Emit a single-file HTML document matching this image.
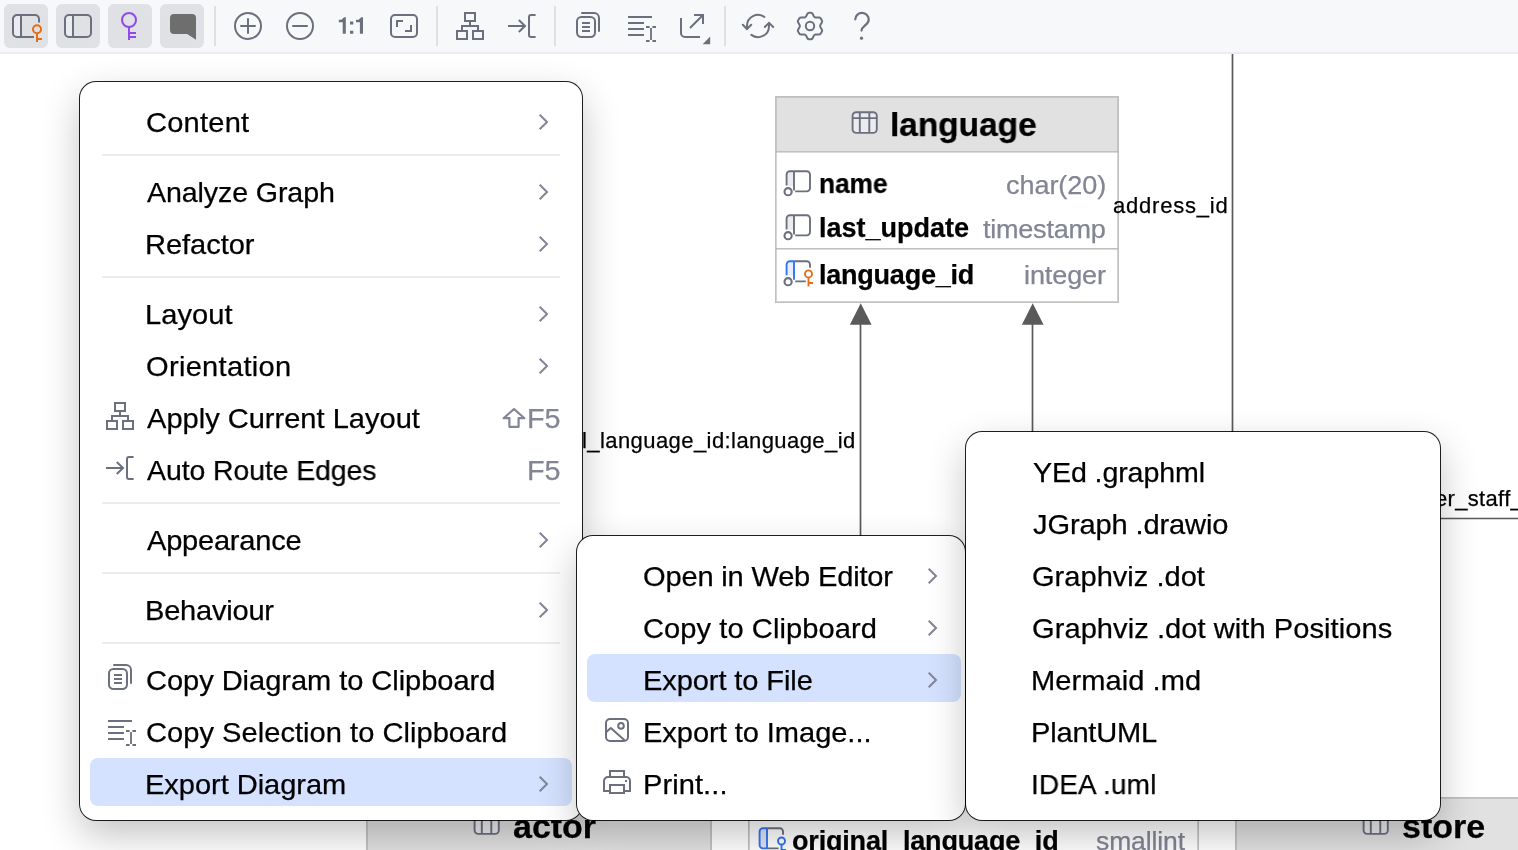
<!DOCTYPE html>
<html><head><meta charset="utf-8"><title>Diagram</title>
<style>
html,body{margin:0;padding:0}
body{width:1518px;height:850px;overflow:hidden;background:#fff;font-family:"Liberation Sans",sans-serif;position:relative;color:#000}
svg{display:block;overflow:visible}
#canvas{position:absolute;left:0;top:0;width:1518px;height:850px;overflow:hidden}
.edges{position:absolute;left:0;top:0}
#toolbar{position:absolute;left:0;top:0;width:1518px;height:52px;background:#f7f8fa;border-bottom:2px solid #ebecf0}
.tb{position:absolute;top:4px;width:44px;height:44px;border-radius:6px}
.tb svg{position:absolute;left:6px;top:6px}
.tb.pressed{background:#dfe1e5}
.tsep{position:absolute;top:6px;width:2px;height:40px;background:#dfe0e6}
.ddtri{position:absolute;left:701.5px;top:36px}
.menu{position:absolute;background:#fff;border-radius:16px;box-shadow:0 0 0 1px rgba(0,0,0,.88),0 15px 38px rgba(0,0,0,.24)}
.t{-webkit-text-stroke:0.25px currentColor;position:absolute;white-space:nowrap;transform-origin:0 50%;color:#000;will-change:transform}
.t.sc{color:#818594}
.t.ctype{color:#818594}
.t.one{color:#6C707E}
.sep{position:absolute;height:2px;background:#ebecf0}
.selrow{position:absolute;height:48px;border-radius:8px;background:#d4e2ff}
.micon,.chev,.shift{position:absolute}
.dtable{position:absolute;box-sizing:border-box;border:1px solid #c0c0c0;background:#fff}
.dtable::after{content:"";position:absolute;left:0;top:0;right:0;bottom:0;box-shadow:inset 0 0 0 1px rgba(170,170,170,.5);pointer-events:none}
.dhead{position:absolute;left:0;top:0;right:0;background:#e1e1e1}
.drule{position:absolute;left:0;right:0;height:1px;background:#c0c0c0;box-shadow:0 1px 0 rgba(170,170,170,.42)}
.ticon{position:absolute}
.mi{font-size:28.5px;line-height:28.5px;font-weight:normal;transform:scaleX(1.02);}
.sc{font-size:28.5px;line-height:28.5px;font-weight:normal;transform:scaleX(1.02);}
.lab{font-size:22px;line-height:22px;font-weight:normal;}
.thead{font-size:34px;line-height:34px;font-weight:bold;}
.cname{font-size:27px;line-height:27px;font-weight:bold;}
.ctype{font-size:26px;line-height:26px;font-weight:normal;transform:scaleX(1.04);}
.one{font-size:24px;line-height:24px;font-weight:bold;}
</style></head><body>
<div id="canvas">
<svg class="edges" width="1518" height="850" viewBox="0 0 1518 850">
 <g stroke="#5a5a5a" stroke-width="1.700" fill="none">
  <path d="M1232.500 52V460"/>
  <path d="M860.500 322V560"/>
  <path d="M1032.500 322V460"/>
  <path d="M1425 540V520.500a2 2 0 0 1 2-2H1520"/>
 </g>
 <path d="M860.700 303.300L849.900 324.800H871.600z" fill="#5a5a5a"/>
 <path d="M1032.700 303.300L1021.900 324.800H1043.600z" fill="#5a5a5a"/>
</svg>

<div class="dtable" style="left:775px;top:96px;width:344px;height:207px">
  <div class="dhead" style="height:54px"></div>
  <div class="drule" style="top:54px"></div>
  <div class="drule" style="top:151px"></div>
  <div class="ticon" style="left:71.20000000000005px;top:10px"><svg width="34" height="34" viewBox="0 0 34 34" fill="none" stroke-width="1.9">
<rect x="5.600" y="5.200" width="24.200" height="20.700" rx="3.600" fill="#EBECF0" stroke="#6C707E"/>
<path d="M5.600 11.100H29.800M12.800 5.200V25.900M22.300 5.200V25.900" stroke="#6C707E"/></svg></div>
  <div class="ticon" style="left:5px;top:69px"><svg width="34" height="34" viewBox="0 0 34 34" fill="none" stroke-width="1.9">
<path d="M6.500 6.200h6v14h-6z" fill="#EBECF0"/>
<path d="M5.600 19.500V8.500a3.300 3.300 0 0 1 3.300-3.300H25.700a3.300 3.300 0 0 1 3.300 3.300V22.100a3.300 3.300 0 0 1-3.300 3.300H14.200" stroke="#6C707E"/>
<path d="M13 5.200V24.600" stroke="#6C707E"/>
<circle cx="7.100" cy="25.700" r="3.600" fill="#fff" stroke="#6C707E" stroke-width="2.100"/></svg></div>
  <div class="ticon" style="left:5px;top:113.30000000000001px"><svg width="34" height="34" viewBox="0 0 34 34" fill="none" stroke-width="1.9">
<path d="M6.500 6.200h6v14h-6z" fill="#EBECF0"/>
<path d="M5.600 19.500V8.500a3.300 3.300 0 0 1 3.300-3.300H25.700a3.300 3.300 0 0 1 3.300 3.300V22.100a3.300 3.300 0 0 1-3.300 3.300H14.200" stroke="#6C707E"/>
<path d="M13 5.200V24.600" stroke="#6C707E"/>
<circle cx="7.100" cy="25.700" r="3.600" fill="#fff" stroke="#6C707E" stroke-width="2.100"/></svg></div>
  <div class="ticon" style="left:5px;top:159px"><svg width="34" height="34" viewBox="0 0 34 34" fill="none" stroke-width="1.9">
<path d="M6.500 6.200h6v13.500h-6z" fill="#E7EFFD"/>
<path d="M13.900 5.200H25.700a3.300 3.300 0 0 1 3.300 3.300V11.800M14.200 25.400H24.800" stroke="#6C707E"/>
<path d="M5.600 19.300V8.500a3.300 3.300 0 0 1 3.300-3.300H13V23.800" stroke="#3574F0"/>
<circle cx="7.100" cy="25.700" r="3.600" fill="#fff" stroke="#6C707E" stroke-width="2.100"/>
<circle cx="27.500" cy="17.900" r="3.500" stroke="#E66D17"/>
<path d="M27.500 21.400V30.600M27.500 27H32" stroke="#E66D17"/></svg></div>
  <span id="th" class="t thead" style="left:113.79px;top:9.71px;letter-spacing:-0.100px;transform:scaleX(0.9870);">language</span>
  <span id="c1" class="t cname" style="left:43.43px;top:74.14px;letter-spacing:-0.104px;transform:scaleX(0.9752);">name</span>
  <span id="c2" class="t cname" style="left:43.41px;top:118.34px;letter-spacing:0.007px;">last_update</span>
  <span id="c3" class="t cname" style="left:43.41px;top:164.64px;letter-spacing:-0.225px;">language_id</span>
  <span id="d1" class="t ctype" style="left:229.67px;top:74.99px;letter-spacing:-0.064px;">char(20)</span>
  <span id="d2" class="t ctype" style="left:206.71px;top:119.19px;letter-spacing:-0.235px;">timestamp</span>
  <span id="d3" class="t ctype" style="left:247.67px;top:165.49px;letter-spacing:-0.113px;">integer</span>
</div>

<div class="dtable" style="left:366px;top:797px;width:346px;height:80px">
  <div class="dhead" style="height:76px"></div>
  <div class="ticon" style="left:102.39999999999998px;top:9.799999999999955px"><svg width="34" height="34" viewBox="0 0 34 34" fill="none" stroke-width="1.9">
<rect x="5.600" y="5.200" width="24.200" height="20.700" rx="3.600" fill="#EBECF0" stroke="#6C707E"/>
<path d="M5.600 11.100H29.800M12.800 5.200V25.900M22.300 5.200V25.900" stroke="#6C707E"/></svg></div>
  <span id="ba" class="t thead" style="left:145.71px;top:10.51px;letter-spacing:-0.029px;">actor</span>
</div>
<div class="dtable" style="left:748px;top:797px;width:451px;height:80px">
  <div class="ticon" style="left:5.100000000000023px;top:24.799999999999955px"><svg width="34" height="34" viewBox="0 0 34 34" fill="none" stroke-width="1.9">
<path d="M13 5.200H8.900a3.300 3.300 0 0 0-3.300 3.300V22.100a3.300 3.300 0 0 0 3.300 3.300H13z" fill="#DCE6FA" stroke="#3574F0"/>
<path d="M13.900 5.200H25.700a3.300 3.300 0 0 1 3.300 3.300V11.800M13.900 25.400H24.600" stroke="#6C707E"/>
<circle cx="27.500" cy="18" r="3.500" stroke="#3574F0"/>
<path d="M27.500 21.500V30.600M27.500 27H32" stroke="#3574F0"/></svg></div>
  <span id="bo" class="t cname" style="left:42.71px;top:30.14px;letter-spacing:-0.177px;">original_language_id</span>
  <span id="bs" class="t ctype" style="left:347.41px;top:29.79px;letter-spacing:-0.102px;transform:scaleX(1.0192);">smallint</span>
</div>
<div class="dtable" style="left:1235px;top:797px;width:300px;height:80px">
  <div class="dhead" style="height:76px"></div>
  <div class="ticon" style="left:122.29999999999995px;top:10px"><svg width="34" height="34" viewBox="0 0 34 34" fill="none" stroke-width="1.9">
<rect x="5.600" y="5.200" width="24.200" height="20.700" rx="3.600" fill="#EBECF0" stroke="#6C707E"/>
<path d="M5.600 11.100H29.800M12.800 5.200V25.900M22.300 5.200V25.900" stroke="#6C707E"/></svg></div>
  <span id="bst" class="t thead" style="left:165.71px;top:11.21px;letter-spacing:0.014px;">store</span>
</div>
<span id="lab1" class="t lab" style="left:1112.91px;top:194.57px;letter-spacing:0.778px;">address_id</span><span id="lab2" class="t lab" style="left:582.31px;top:429.67px;letter-spacing:0.425px;">l_language_id:language_id</span><span id="lab3" class="t lab" style="left:1435.21px;top:488.07px;letter-spacing:0.327px;">er_staff_</span></div>
<div id="toolbar"><div class="tb pressed" style="left:4px"><svg width="32" height="32" viewBox="0 0 16 16" fill="none" >
<path d="M2 3h3.5v10H2z" fill="#EBECF0"/>
<path d="M14.5 6.200V4.500a2 2 0 0 0-2-2h-9a2 2 0 0 0-2 2v7a2 2 0 0 0 2 2H12M5.5 2.5v11" stroke="#6C707E"/>
<circle cx="13.500" cy="9.600" r="2" stroke="#E66D17"/>
<path d="M13.500 11.600V16M13.500 14.500h2.500" stroke="#E66D17"/></svg></div><div class="tb pressed" style="left:56px"><svg width="32" height="32" viewBox="0 0 16 16" fill="none" >
<path d="M2 3h3.5v10H2z" fill="#EBECF0"/>
<rect x="1.5" y="2.5" width="13" height="11" rx="2" stroke="#6C707E"/>
<path d="M5.5 2.5v11" stroke="#6C707E"/></svg></div><div class="tb pressed" style="left:108px"><svg width="32" height="32" viewBox="0 0 16 16" fill="none" >
<circle cx="7.5" cy="5" r="3.5" stroke="#8F4BE8"/>
<path d="M7.5 8.5V15M7.5 11.500h3.5M7.5 13.500h3.5" stroke="#8F4BE8"/></svg></div><div class="tb pressed" style="left:160px"><svg width="32" height="32" viewBox="0 0 16 16" fill="none" >
<path d="M4 2h9a2 2 0 0 1 2 2v10.900L10.600 12H4a2 2 0 0 1-2-2V4a2 2 0 0 1 2-2z" fill="#6E6E6E"/></svg></div><div class="tsep" style="left:214px"></div><div class="tb" style="left:226px"><svg width="32" height="32" viewBox="0 0 16 16" fill="none" >
<circle cx="8" cy="8" r="6.5" stroke="#6C707E"/>
<path d="M8 4.5v7M4.5 8h7" stroke="#6C707E" stroke-linecap="round"/></svg></div><div class="tb" style="left:278px"><svg width="32" height="32" viewBox="0 0 16 16" fill="none" >
<circle cx="8" cy="8" r="6.5" stroke="#6C707E"/>
<path d="M4.5 8h7" stroke="#6C707E" stroke-linecap="round"/></svg></div><div class="tb" style="left:330px"><svg style="left:0;top:0" width="44" height="44" viewBox="0 0 44 44"><path fill="#6C707E" d="M15.800 13.200V29.800H12.700V18.200H8.800V15.700H11.300L14.100 13.200zM33 13.200V29.800H29.900V18.200H26V15.700H28.500L31.300 13.200zM20 17.500h3.300v3H20zM20 26.800h3.300v3H20z"/></svg></div><div class="tb" style="left:382px"><svg width="32" height="32" viewBox="0 0 16 16" fill="none" >
<rect x="1.5" y="2.5" width="13" height="11" rx="2" stroke="#6C707E"/>
<path d="M4.5 8.5v-3h3M8.5 10.5h3v-3" stroke="#6C707E"/></svg></div><div class="tsep" style="left:436px"></div><div class="tb" style="left:448px"><svg width="32" height="32" viewBox="0 0 16 16" fill="none" >
<rect x="5.5" y="1.5" width="5" height="4" stroke="#6C707E"/>
<rect x="1.5" y="10.5" width="5" height="4" stroke="#6C707E"/>
<rect x="9.5" y="10.5" width="5" height="4" stroke="#6C707E"/>
<path d="M4 10.5V8h8v2.5M8 5.5V8" stroke="#6C707E"/></svg></div><div class="tb" style="left:500px"><svg width="32" height="32" viewBox="0 0 16 16" fill="none" >
<path d="M1 8h8.5M6.4 5l3.1 3-3.1 3" stroke="#6C707E"/>
<path d="M14.8 2.5h-2.3a1 1 0 0 0-1 1v9a1 1 0 0 0 1 1h2.3" stroke="#6C707E"/></svg></div><div class="tsep" style="left:554px"></div><div class="tb" style="left:566px"><svg width="32" height="32" viewBox="0 0 16 16" fill="none" >
<rect x="2.5" y="3.5" width="9" height="10" rx="2.2" stroke="#6C707E"/>
<path d="M5 1.5h6a2.5 2.5 0 0 1 2.500 2.5v6.500" stroke="#6C707E" stroke-linecap="round"/>
<path d="M5 6.5h4M5 8.5h4M5 10.5h4" stroke="#6C707E"/></svg></div><div class="tb" style="left:618px"><svg width="32" height="32" viewBox="0 0 16 16" fill="none" >
<path d="M2 3.5h12M2 6.500h8M2 9.500h8M2 12.5h8" stroke="#6C707E"/>
<path d="M11 8.500h1.800M14.200 8.500h1.800M11 15.500h1.800M14.200 15.500h1.800M13.500 9v6" stroke="#6C707E" stroke-width="0.9"/></svg></div><div class="tb" style="left:670px"><svg width="32" height="32" viewBox="0 0 16 16" fill="none" >
<path d="M2.5 4v7.5a2 2 0 0 0 2 2H12" stroke="#6C707E"/>
<path d="M7 9l6.500-6.500M9 2.500h4.500V7" stroke="#6C707E"/></svg></div><svg class="ddtri" width="9" height="9" viewBox="0 0 9 9"><path d="M8.2 0.6V8.2H0.6z" fill="#6C707E"/></svg><div class="tsep" style="left:724px"></div><div class="tb" style="left:736px"><svg width="32" height="32" viewBox="0 0 16 16" fill="none" >
<path d="M2.500 9.300V8A5.500 5.500 0 0 1 11.200 3.500" stroke="#6C707E" stroke-linecap="round"/>
<path d="M13.500 6.700V8A5.500 5.500 0 0 1 4.700 12.450" stroke="#6C707E" stroke-linecap="round"/>
<path d="M0.400 7.400l2.100 2.100 2.100-2.100M11.400 8.500l2.100-2.100 2.100 2.100" stroke="#6C707E" stroke-linecap="round"/></svg></div><div class="tb" style="left:788px"><svg width="32" height="32" viewBox="0 0 16 16" fill="none" >
<circle cx="8" cy="8" r="2.100" stroke="#6C707E"/>
<path d="M6.71 1.89Q6.96 1.40 7.51 1.40L8.49 1.40Q9.04 1.40 9.29 1.89L9.95 3.21Q10.20 3.70 10.75 3.70L12.45 3.70Q13.00 3.70 13.29 4.17L13.96 5.23Q14.25 5.70 13.97 6.17L13.18 7.53Q12.90 8.00 13.18 8.47L13.97 9.83Q14.25 10.30 13.96 10.77L13.29 11.83Q13.00 12.30 12.45 12.30L10.75 12.30Q10.20 12.30 9.95 12.79L9.29 14.11Q9.04 14.60 8.49 14.60L7.51 14.60Q6.96 14.60 6.71 14.11L6.05 12.79Q5.80 12.30 5.25 12.30L3.55 12.30Q3.00 12.30 2.71 11.83L2.04 10.77Q1.75 10.30 2.03 9.83L2.82 8.47Q3.10 8.00 2.82 7.53L2.03 6.17Q1.75 5.70 2.04 5.23L2.71 4.17Q3.00 3.70 3.55 3.70L5.25 3.70Q5.80 3.70 6.05 3.21z" stroke="#6C707E" stroke-linejoin="round"/></svg></div><div class="tb" style="left:840px"><svg width="32" height="32" viewBox="0 0 16 16" fill="none" >
<path d="M4.650 4.650A3.350 3.350 0 0 1 11.350 4.900C11.350 6.400 10.300 7.100 9.300 7.900C8.300 8.700 7.750 9.300 7.750 10.300" stroke="#6C707E" stroke-width="1.100" stroke-linecap="round"/>
<circle cx="7.750" cy="14.100" r="0.800" fill="#6C707E"/></svg></div></div>
<div class="menu" id="m1" style="left:80px;top:82px;width:502px;height:738px"><span id="m1t1" class="t mi" style="left:65.98px;top:26.37px;letter-spacing:0.222px;">Content</span><div class="chev" style="left:458px;top:31px"><svg width="12" height="18" viewBox="0 0 12 18" fill="none"><path d="M1.700 1.700L9 9l-7.300 7.300" stroke="#818594" stroke-width="2"/></svg></div><div class="sep" style="left:22px;width:458px;top:72px"></div><span id="m1t2" class="t mi" style="left:67.00px;top:96.37px;letter-spacing:-0.102px;transform:scaleX(1.0029);">Analyze Graph</span><div class="chev" style="left:458px;top:101px"><svg width="12" height="18" viewBox="0 0 12 18" fill="none"><path d="M1.700 1.700L9 9l-7.300 7.300" stroke="#818594" stroke-width="2"/></svg></div><span id="m1t3" class="t mi" style="left:65.47px;top:148.37px;letter-spacing:-0.050px;">Refactor</span><div class="chev" style="left:458px;top:153px"><svg width="12" height="18" viewBox="0 0 12 18" fill="none"><path d="M1.700 1.700L9 9l-7.300 7.300" stroke="#818594" stroke-width="2"/></svg></div><div class="sep" style="left:22px;width:458px;top:194px"></div><span id="m1t4" class="t mi" style="left:65.47px;top:218.37px;letter-spacing:0.082px;">Layout</span><div class="chev" style="left:458px;top:223px"><svg width="12" height="18" viewBox="0 0 12 18" fill="none"><path d="M1.700 1.700L9 9l-7.300 7.300" stroke="#818594" stroke-width="2"/></svg></div><span id="m1t5" class="t mi" style="left:65.98px;top:270.37px;letter-spacing:0.289px;">Orientation</span><div class="chev" style="left:458px;top:275px"><svg width="12" height="18" viewBox="0 0 12 18" fill="none"><path d="M1.700 1.700L9 9l-7.300 7.300" stroke="#818594" stroke-width="2"/></svg></div><div class="micon" style="left:24px;top:318px"><svg width="32" height="32" viewBox="0 0 16 16" fill="none" >
<rect x="5.5" y="1.5" width="5" height="4" stroke="#6C707E"/>
<rect x="1.5" y="10.5" width="5" height="4" stroke="#6C707E"/>
<rect x="9.5" y="10.5" width="5" height="4" stroke="#6C707E"/>
<path d="M4 10.5V8h8v2.5M8 5.5V8" stroke="#6C707E"/></svg></div><span id="m1t6" class="t mi" style="left:67.00px;top:322.37px;letter-spacing:-0.010px;">Apply Current Layout</span><div class="shift" style="left:420.8px;top:324.8px"><svg width="26" height="22" viewBox="0 0 26 22" fill="none"><path d="M13 2L2.600 11.200H8.400V19.800H17.600V11.200H23.400z" stroke="#818594" stroke-width="2.200" stroke-linejoin="round"/></svg></div><span id="m1s6" class="t sc" style="left:446.69px;top:322.37px;letter-spacing:-0.106px;transform:scaleX(1.0096);">F5</span><div class="micon" style="left:24px;top:370px"><svg width="32" height="32" viewBox="0 0 16 16" fill="none" >
<path d="M1 8h8.5M6.4 5l3.1 3-3.1 3" stroke="#6C707E"/>
<path d="M14.8 2.5h-2.3a1 1 0 0 0-1 1v9a1 1 0 0 0 1 1h2.3" stroke="#6C707E"/></svg></div><span id="m1t7" class="t mi" style="left:67.00px;top:374.37px;letter-spacing:-0.101px;transform:scaleX(0.9986);">Auto Route Edges</span><span id="m1s7" class="t sc" style="left:447.49px;top:374.37px;letter-spacing:-0.106px;transform:scaleX(1.0096);">F5</span><div class="sep" style="left:22px;width:458px;top:420px"></div><span id="m1t8" class="t mi" style="left:67.00px;top:444.37px;letter-spacing:-0.235px;">Appearance</span><div class="chev" style="left:458px;top:449px"><svg width="12" height="18" viewBox="0 0 12 18" fill="none"><path d="M1.700 1.700L9 9l-7.300 7.300" stroke="#818594" stroke-width="2"/></svg></div><div class="sep" style="left:22px;width:458px;top:490px"></div><span id="m1t9" class="t mi" style="left:65.47px;top:514.37px;letter-spacing:-0.231px;">Behaviour</span><div class="chev" style="left:458px;top:519px"><svg width="12" height="18" viewBox="0 0 12 18" fill="none"><path d="M1.700 1.700L9 9l-7.300 7.300" stroke="#818594" stroke-width="2"/></svg></div><div class="sep" style="left:22px;width:458px;top:560px"></div><div class="micon" style="left:24px;top:580px"><svg width="32" height="32" viewBox="0 0 16 16" fill="none" >
<rect x="2.5" y="3.5" width="9" height="10" rx="2.2" stroke="#6C707E"/>
<path d="M5 1.5h6a2.5 2.5 0 0 1 2.500 2.5v6.500" stroke="#6C707E" stroke-linecap="round"/>
<path d="M5 6.5h4M5 8.5h4M5 10.5h4" stroke="#6C707E"/></svg></div><span id="m1t10" class="t mi" style="left:65.98px;top:584.37px;letter-spacing:-0.051px;">Copy Diagram to Clipboard</span><div class="micon" style="left:24px;top:632px"><svg width="32" height="32" viewBox="0 0 16 16" fill="none" >
<path d="M2 3.5h12M2 6.500h8M2 9.500h8M2 12.5h8" stroke="#6C707E"/>
<path d="M11 8.500h1.800M14.200 8.500h1.800M11 15.500h1.800M14.200 15.500h1.800M13.500 9v6" stroke="#6C707E" stroke-width="0.9"/></svg></div><span id="m1t11" class="t mi" style="left:65.98px;top:636.37px;letter-spacing:0.029px;">Copy Selection to Clipboard</span><div class="selrow" style="left:10px;width:482px;top:676px"></div><span id="m1t12" class="t mi" style="left:65.47px;top:688.37px;letter-spacing:-0.048px;">Export Diagram</span><div class="chev" style="left:458px;top:693px"><svg width="12" height="18" viewBox="0 0 12 18" fill="none"><path d="M1.700 1.700L9 9l-7.300 7.300" stroke="#818594" stroke-width="2"/></svg></div></div>
<div class="menu" id="m2" style="left:577px;top:536px;width:388px;height:284px"><span id="m2t1" class="t mi" style="left:66.23px;top:26.37px;letter-spacing:-0.182px;">Open in Web Editor</span><div class="chev" style="left:350px;top:31px"><svg width="12" height="18" viewBox="0 0 12 18" fill="none"><path d="M1.700 1.700L9 9l-7.300 7.300" stroke="#818594" stroke-width="2"/></svg></div><span id="m2t2" class="t mi" style="left:66.23px;top:78.37px;letter-spacing:0.073px;">Copy to Clipboard</span><div class="chev" style="left:350px;top:83px"><svg width="12" height="18" viewBox="0 0 12 18" fill="none"><path d="M1.700 1.700L9 9l-7.300 7.300" stroke="#818594" stroke-width="2"/></svg></div><div class="selrow" style="left:10px;width:374px;top:118px"></div><span id="m2t3" class="t mi" style="left:65.72px;top:130.37px;letter-spacing:-0.103px;">Export to File</span><div class="chev" style="left:350px;top:135px"><svg width="12" height="18" viewBox="0 0 12 18" fill="none"><path d="M1.700 1.700L9 9l-7.300 7.300" stroke="#818594" stroke-width="2"/></svg></div><div class="micon" style="left:24px;top:178px"><svg width="32" height="32" viewBox="0 0 16 16" fill="none" >
<rect x="2.500" y="2.500" width="11" height="11" rx="2" stroke="#6C707E"/>
<circle cx="10" cy="5.950" r="1.400" stroke="#6C707E"/>
<path d="M2.500 9.100L4.900 7L11.900 13.300" stroke="#6C707E" stroke-linejoin="round"/></svg></div><span id="m2t4" class="t mi" style="left:65.72px;top:182.37px;letter-spacing:-0.055px;">Export to Image...</span><div class="micon" style="left:24px;top:230px"><svg width="32" height="32" viewBox="0 0 16 16" fill="none" >
<path d="M4.500 5.500V2.500H11.500V5.500" stroke="#6C707E"/>
<path d="M4.500 12.500H1.500V7.500a2 2 0 0 1 2-2h9a2 2 0 0 1 2 2V12.500H11.500" stroke="#6C707E"/>
<rect x="4.500" y="9.500" width="7" height="4" stroke="#6C707E"/>
<rect x="12" y="7" width="1" height="1" fill="#6C707E"/></svg></div><span id="m2t5" class="t mi" style="left:65.72px;top:234.37px;letter-spacing:0.068px;">Print...</span></div>
<div class="menu" id="m3" style="left:966px;top:432px;width:474px;height:388px"><span id="m3t1" class="t mi" style="left:67.00px;top:26.37px;letter-spacing:-0.101px;transform:scaleX(1.0030);">YEd .graphml</span><span id="m3t2" class="t mi" style="left:67.00px;top:78.37px;letter-spacing:-0.132px;">JGraph .drawio</span><span id="m3t3" class="t mi" style="left:65.98px;top:130.37px;letter-spacing:0.003px;">Graphviz .dot</span><span id="m3t4" class="t mi" style="left:65.98px;top:182.37px;letter-spacing:0.057px;">Graphviz .dot with Positions</span><span id="m3t5" class="t mi" style="left:65.22px;top:234.37px;letter-spacing:0.052px;">Mermaid .md</span><span id="m3t6" class="t mi" style="left:65.22px;top:286.37px;letter-spacing:-0.209px;">PlantUML</span><span id="m3t7" class="t mi" style="left:65.29px;top:338.37px;letter-spacing:0.095px;transform:scaleX(0.9827);">IDEA .uml</span></div>
</body></html>
